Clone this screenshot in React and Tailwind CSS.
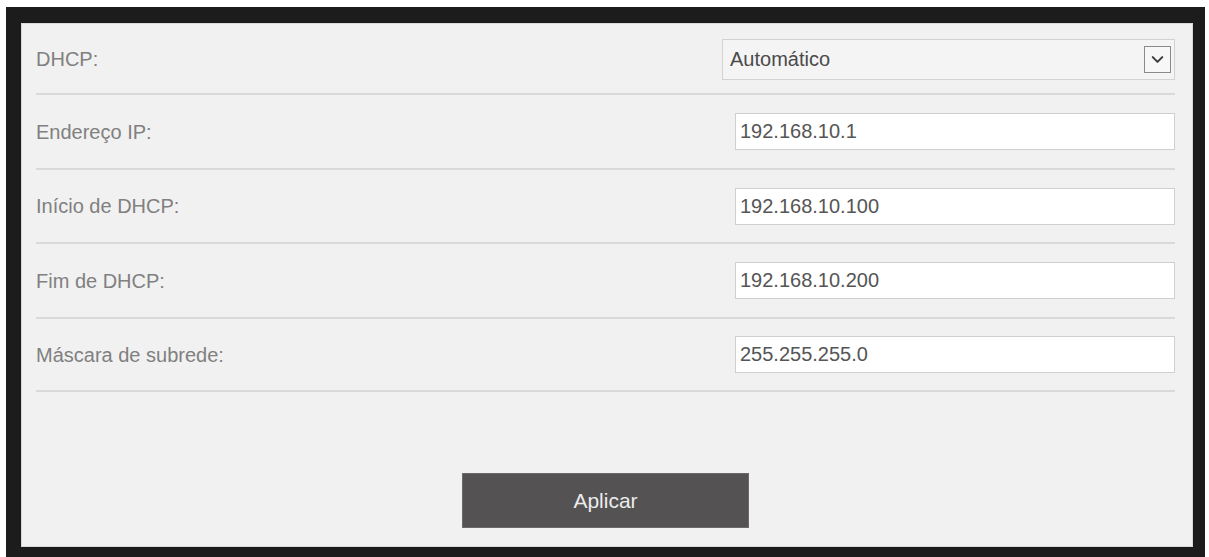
import React, { useState } from 'react';
import { ChevronDown } from 'lucide-react';

const fields = [
  { id: 'ip', label: 'Endereço IP:', value: '192.168.10.1', height: 'h-[75px]' },
  { id: 'start', label: 'Início de DHCP:', value: '192.168.10.100', height: 'h-[74px]' },
  { id: 'end', label: 'Fim de DHCP:', value: '192.168.10.200', height: 'h-[75px]' },
  { id: 'mask', label: 'Máscara de subrede:', value: '255.255.255.0', height: 'h-[73px]' },
];

export default function App() {
  const [values, setValues] = useState(
    Object.fromEntries(fields.map((f) => [f.id, f.value]))
  );

  return (
    <div className="w-[1209px] h-[557px] overflow-hidden bg-white pt-[7px] pl-[6px] pr-[4px] font-['Liberation_Sans',Arial,sans-serif]">
      <div className="h-[560px] bg-[#1c1c1c] pt-[16px] pl-[15px] pr-[12px]">
        {/* LAN / DHCP settings panel */}
        <div className="h-[524px] bg-[#f1f1f1] border border-[#d8d8d8] pl-[14px] pr-[17px] flex flex-col">
          <div className="h-[71px] flex-none flex items-center justify-between border-b-2 border-[#d9d9d9]">
            <span className="text-[20px] text-[#808080]">DHCP:</span>
            <div className="w-[453px] h-[41px] mt-[1px] flex items-center justify-between border border-[#d2d2d2] bg-[#f4f4f4] pl-[7px] pr-[3px]">
              <span className="text-[20px] text-[#4a4a4a]">Automático</span>
              <div className="w-[27px] h-[27px] flex-none flex items-center justify-center border border-[#8a8a8a] bg-[#f7f7f7]">
                <ChevronDown size={19} strokeWidth={2.6} color="#3c3c3c" />
              </div>
            </div>
          </div>

          {fields.map((f) => (
            <div
              key={f.id}
              className={`${f.height} flex-none flex items-center justify-between border-b-2 border-[#d9d9d9]`}
            >
              <span className="text-[20px] text-[#808080]">{f.label}</span>
              <input
                value={values[f.id]}
                onChange={(e) => setValues({ ...values, [f.id]: e.target.value })}
                className="w-[440px] h-[37px] border border-[#cfcfcf] bg-white px-[4px] text-[20px] text-[#555555] outline-none"
              />
            </div>
          ))}

          <div className="flex justify-center pt-[81px]">
            <button className="w-[287px] h-[55px] bg-[#545252] text-[21px] text-[#ececec] border border-[#6a6a6a]">
              Aplicar
            </button>
          </div>
        </div>
      </div>
    </div>
  );
}
